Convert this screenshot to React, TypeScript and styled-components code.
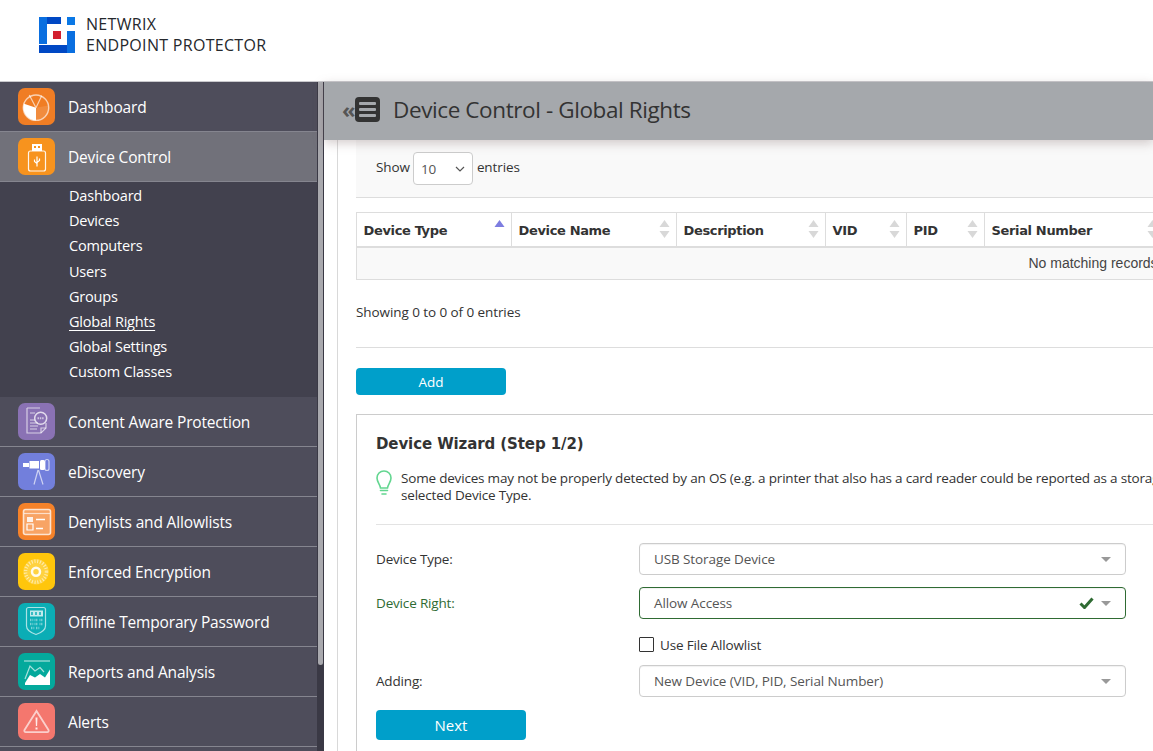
import React from 'react';
import styled, { createGlobalStyle } from 'styled-components';

const GlobalStyle = createGlobalStyle`
    html, body {
        margin: 0;
        height: 100%;
        overflow: hidden;
        background: #fff;
    }
    * {
        box-sizing: border-box;
    }
`;

const uiFont = `"Open Sans", "Noto Sans", "Liberation Sans", sans-serif`;

const Page = styled.div`
    width: 1153px;
    height: 751px;
    display: flex;
    flex-direction: column;
    overflow: hidden;
    font-family: ${uiFont};
    color: #333;
`;

const Header = styled.header`
    height: 82px;
    flex: none;
    display: flex;
    align-items: flex-start;
    gap: 11px;
    padding: 14px 0 0 39px;
    border-bottom: 1px solid #c9c9cd;
`;

const LogoMark = styled.svg`
    margin-top: 3px;
`;

const BrandText = styled.div`
    font-size: 16px;
    line-height: 21px;
    color: #25282d;
    letter-spacing: 0.3px;
    white-space: nowrap;
`;

const Body = styled.div`
    flex: 1;
    display: flex;
    min-height: 0;
`;

const Sidebar = styled.nav`
    width: 324px;
    flex: none;
    display: flex;
    background: #3a3945;
    overflow: hidden;
`;

const NavList = styled.div`
    width: 317px;
    flex: none;
    background: #4e4d5b;
`;

const Scrollbar = styled.div`
    width: 5px;
    height: 583px;
    margin-left: 1px;
    background: #a9a9ae;
    border-radius: 0 0 3px 3px;
`;

const NavRow = styled.div<{ $active?: boolean }>`
    height: 50px;
    display: flex;
    align-items: center;
    gap: 13px;
    padding-left: 18px;
    background: ${p => (p.$active ? '#71717a' : '#4e4d5b')};
    border-bottom: 1px solid #85858f;
    color: #fff;
    font-size: 15.5px;
    letter-spacing: -0.17px;
    white-space: nowrap;
`;

const NavIcon = styled.span<{ $bg: string }>`
    width: 37px;
    height: 37px;
    flex: none;
    display: block;
    border-radius: 7px;
    background: ${p => p.$bg};
    svg {
        display: block;
    }
`;

const SubMenu = styled.div`
    background: #42414e;
    padding: 1px 0 0 69px;
    height: 215px;
`;

const SubItem = styled.div<{ $current?: boolean }>`
    height: 25.2px;
    line-height: 25px;
    font-size: 14.5px;
    letter-spacing: -0.2px;
    color: #fff;
    text-decoration: ${p => (p.$current ? 'underline' : 'none')};
    text-underline-offset: 3px;
`;

const Main = styled.main`
    flex: 1;
    min-width: 0;
    display: flex;
    flex-direction: column;
`;

const TitleBar = styled.div`
    height: 58px;
    flex: none;
    display: flex;
    align-items: center;
    padding: 0 0 3px 18px;
    background: #a5a8ac;
    box-shadow: 0 3px 10px rgba(130, 105, 105, 0.35);
    position: relative;
    z-index: 1;
`;

const Collapse = styled.span`
    font-size: 22px;
    font-weight: 700;
    line-height: 22px;
    color: #555;
    width: 13px;
    margin-top: -2px;
`;

const Burger = styled.span`
    width: 25px;
    height: 25px;
    flex: none;
    display: flex;
    flex-direction: column;
    justify-content: center;
    gap: 3px;
    padding: 0 4px;
    background: #333;
    border-radius: 4px;
    i {
        display: block;
        height: 3px;
        background: #a5a8ac;
        border-radius: 1px;
    }
`;

const Title = styled.h1`
    margin: 0 0 0 13px;
    font-size: 22.5px;
    letter-spacing: -0.4px;
    font-weight: 400;
    color: #333;
    white-space: nowrap;
`;

const Content = styled.div`
    flex: 1;
    min-height: 0;
    margin-left: 13px;
    border-left: 1px solid #d9d9d9;
    padding-left: 18px;
    overflow: hidden;
`;

const LengthPanel = styled.div`
    width: 1000px;
    height: 58px;
    padding: 12px 0 0 20px;
    display: flex;
    align-items: flex-start;
    gap: 3px;
    background: #f9f9f9;
    border-bottom: 1px solid #ddd;
    font-size: 13.5px;
    letter-spacing: -0.1px;
    line-height: 30px;
`;

const LengthSelect = styled.div`
    width: 60px;
    height: 33px;
    display: flex;
    align-items: center;
    justify-content: space-between;
    padding: 0 7px;
    margin-right: 1px;
    background: #fff;
    border: 1px solid #ccc;
    border-radius: 4px;
    color: #555;
`;

const Table = styled.table`
    margin-top: 14px;
    width: 1512px;
    table-layout: fixed;
    border-collapse: collapse;
`;

const HeadCell = styled.th<{ $w: number }>`
    width: ${p => p.$w}px;
    height: 34px;
    padding: 2px 7px 0 6.5px;
    text-align: left;
    position: relative;
    border: 1px solid #ddd;
    border-bottom: 2px solid #ddd;
    font-family: "DejaVu Sans", sans-serif;
    font-size: 13px;
    font-weight: 700;
    letter-spacing: -0.35px;
    color: #333;
    white-space: nowrap;
`;

const SortIcon = styled.svg`
    position: absolute;
    right: 6px;
    top: 7px;
`;

const EmptyCell = styled.td`
    height: 33px;
    background: #f9f9f9;
    border: 1px solid #ddd;
    text-align: center;
    font-family: "Liberation Sans", sans-serif;
    font-size: 14px;
    color: #444;
`;

const Info = styled.div`
    margin-top: 23px;
    font-size: 13.5px;
    letter-spacing: -0.08px;
    line-height: 19px;
`;

const Divider = styled.hr`
    margin: 25px 0 20px;
    width: 1000px;
    height: 1px;
    border: 0;
    background: #ddd;
`;

const PrimaryButton = styled.button<{ $large?: boolean }>`
    display: block;
    width: 150px;
    height: ${p => (p.$large ? '30px' : '27px')};
    padding: 0;
    border: 0;
    border-radius: 4px;
    background: #009fca;
    color: #fff;
    font-family: ${uiFont};
    font-size: ${p => (p.$large ? '15px' : '13.5px')};
`;

const Wizard = styled.section`
    margin-top: 19px;
    width: 1000px;
    border: 1px solid #ccc;
    padding: 18px 19px 0;
    height: 400px;
`;

const WizardTitle = styled.h2`
    margin: 0;
    font-family: "DejaVu Sans", sans-serif;
    font-size: 15px;
    line-height: 22px;
    font-weight: 700;
    letter-spacing: -0.1px;
    color: #333;
`;

const Hint = styled.div`
    margin-top: 15px;
    padding-bottom: 20px;
    display: flex;
    gap: 9px;
    border-bottom: 1px solid #e3e3e3;
    font-size: 13.5px;
    letter-spacing: -0.19px;
    line-height: 17px;
    white-space: nowrap;
`;

const FormRow = styled.div<{ $top: number }>`
    margin-top: ${p => p.$top}px;
    display: flex;
    align-items: center;
    height: 32px;
`;

const FieldLabel = styled.label<{ $ok?: boolean }>`
    width: 263px;
    flex: none;
    font-size: 13.5px;
    letter-spacing: -0.17px;
    color: ${p => (p.$ok ? '#2f6b33' : '#333')};
`;

const SelectBox = styled.div<{ $ok?: boolean }>`
    width: 487px;
    height: 100%;
    display: flex;
    align-items: center;
    padding: 0 14px;
    background: #fff;
    border: 1px solid ${p => (p.$ok ? '#2f6b33' : '#ccc')};
    border-radius: 4px;
    font-size: 13.5px;
    letter-spacing: -0.1px;
    color: #555;
    box-shadow: inset 0 1px 1px rgba(0, 0, 0, 0.06);
    span {
        flex: 1;
    }
`;

const Caret = styled.i`
    width: 0;
    height: 0;
    border-left: 5px solid transparent;
    border-right: 5px solid transparent;
    border-top: 5px solid #999;
`;

const ValidMark = styled.svg`
    margin-right: 7px;
`;

const CheckRow = styled.label`
    margin: 17px 0 0 263px;
    height: 17px;
    display: flex;
    align-items: center;
    gap: 6px;
    font-size: 13.5px;
    letter-spacing: -0.17px;
`;

const CheckBox = styled.span`
    width: 15px;
    height: 15px;
    border: 1px solid #333;
    border-radius: 1px;
    background: #fff;
`;

const WizardActions = styled.div`
    margin-top: 13px;
`;

const BulbIcon = styled.svg`
    flex: none;
`;

const Logo = () => (
    <LogoMark width="36" height="36" viewBox="0 0 36 36">
        <path d="M0 0h8v27H0z" fill="#0a6fe0" />
        <path d="M8 0h14v7H8z" fill="#0048c4" />
        <path d="M28 0h8v8h-8z" fill="#0a78e6" />
        <path d="M0 28h28v8H0z" fill="#0048c4" />
        <path d="M28 14h8v22h-8z" fill="#0a6fe0" />
        <path d="M14 14h8v8h-8z" fill="#d3202f" />
    </LogoMark>
);

const stroke = { fill: 'none', stroke: '#fff', strokeWidth: 1.2 };
const pale = { fill: 'none', stroke: '#fff', strokeWidth: 1.2, opacity: 0.65 };

const icons: Record<string, React.ReactNode> = {
    pie: (
        <>
            <circle cx="18" cy="19.700" r="12.700" {...pale} strokeWidth={1.4} />
            <path d="M18 19.700L6 15.700A12.700 12.700 0 0 0 18 32.400z" fill="#fff" />
            <path d="M18 19.700L11.300 7M18 19.700L23.700 7.700" {...pale} />
            <path d="M18 19.700L30.500 17.500A12.700 12.700 0 0 1 18 32.400z" fill="#fff" opacity="0.12" />
        </>
    ),
    usb: (
        <>
            <path d="M14 6h10v7H14z" fill="#fff" />
            <path d="M16 8h2v2h-2zM20 8h2v2h-2z" fill="#f7931e" />
            <rect x="10.500" y="13" width="17" height="20" rx="2" {...stroke} opacity="0.9" />
            <path d="M19 18.500v10M16.500 21.500v2l2.500 2M21.500 20.500v2l-2.500 2" {...stroke} />
        </>
    ),
    paper: (
        <>
            <path d="M9 5h13M9 5v25h14l5-5v-5" {...pale} />
            <path d="M23 30v-5h5" {...pale} />
            <circle cx="22.700" cy="15.300" r="6" {...stroke} strokeWidth={1.5} opacity="0.75" />
            <path d="M19.500 15.300h6.500" stroke="#fff" strokeWidth="2" strokeDasharray="1.500 .8" opacity="0.6" />
            <path d="M12 10h5M12 17h5M12 20h8M12 23h8M12 26h7" stroke="#fff" strokeWidth="1.500" opacity="0.45" />
        </>
    ),
    scope: (
        <>
            <path d="M5 10h6v4H5zM11.500 8h9.500v7.500h-9.500z" fill="#fff" />
            <rect x="22" y="7" width="5" height="10" rx="1.500" fill="#fff" />
            <rect x="27" y="6.500" width="4" height="11" rx="2" {...pale} />
            <path d="M20 17l-4 14.500M20.500 17l4.500 14.500" {...pale} />
        </>
    ),
    list: (
        <>
            <rect x="5.500" y="6.500" width="27" height="25" rx="2" fill="#fff" fillOpacity="0.28" stroke="#fff" strokeOpacity="0.75" strokeWidth="1.600" />
            <path d="M6 10.500h26" {...pale} />
            <path d="M9 14h6v5H9z" fill="#fff" opacity="0.85" />
            <path d="M9 21h6v6H9z" fill="none" stroke="#fff" strokeWidth="1.200" />
            <path d="M18 16.500h9M18 25.500h7" stroke="#fff" strokeWidth="1.400" />
        </>
    ),
    lock: (
        <>
            <circle cx="18" cy="18.700" r="12.700" fill="#fff" opacity="0.22" />
            <circle cx="18" cy="18.700" r="10.500" fill="none" stroke="#fff" strokeWidth="3.500" strokeDasharray="1 1.800" opacity="0.6" />
            <circle cx="18" cy="18.700" r="4" fill="none" stroke="#fff" strokeWidth="2.500" opacity="0.9" />
        </>
    ),
    keypad: (
        <>
            <path d="M8.500 6.500a2 2 0 0 1 2-2h15a2 2 0 0 1 2 2V23c0 4-5 7-9.500 8.500C13.500 30 8.500 27 8.500 23z" {...pale} />
            <path d="M12 7.500h13v6H12z" fill="#fff" opacity="0.75" />
            <path d="M14 9v3M18 9v3M22 9v3" stroke="#0badb5" strokeWidth="1.500" />
            <path d="M12 17h3.500M16.500 17H20M21.500 17H25M12 21h3.500M16.500 21H20M21.500 21H25M13 25h3.500M18 25h3.500" stroke="#fff" strokeWidth="2.400" strokeDasharray="1 .6" opacity="0.45" />
        </>
    ),
    chart: (
        <>
            <path d="M6 8h26" {...pale} />
            <path d="M7 32v-2l5-8 5 2.500 5-3.500 5 3.500 5-8V32z" fill="#fff" />
            <path d="M7 26l5-13 5 5 5-3.500 4 4.500" {...pale} />
        </>
    ),
    alert: (
        <>
            <path d="M18.500 8L6.500 27a1.500 1.500 0 0 0 1.300 2.200h21.400a1.500 1.500 0 0 0 1.300-2.200z" {...pale} strokeWidth={1.800} />
            <path d="M17.500 14.500h2l-.4 8.500h-1.200zM17.500 24.500h2v2h-2z" fill="#fff" opacity="0.85" />
        </>
    ),
};

const navBefore = [
    { label: 'Dashboard', icon: 'pie', bg: '#f07d24' },
    { label: 'Device Control', icon: 'usb', bg: '#f7931e', active: true },
];

const navAfter = [
    { label: 'Content Aware Protection', icon: 'paper', bg: '#8a72b4' },
    { label: 'eDiscovery', icon: 'scope', bg: '#727fdc' },
    { label: 'Denylists and Allowlists', icon: 'list', bg: '#f5822a' },
    { label: 'Enforced Encryption', icon: 'lock', bg: '#ffc60b' },
    { label: 'Offline Temporary Password', icon: 'keypad', bg: '#0badb5' },
    { label: 'Reports and Analysis', icon: 'chart', bg: '#04a99c' },
    { label: 'Alerts', icon: 'alert', bg: '#f4776e' },
];

const subItems = ['Dashboard', 'Devices', 'Computers', 'Users', 'Groups', 'Global Rights', 'Global Settings', 'Custom Classes'];

const columns = [
    { label: 'Device Type', w: 155, sort: 'asc' },
    { label: 'Device Name', w: 165, sort: 'both' },
    { label: 'Description', w: 149, sort: 'both' },
    { label: 'VID', w: 81, sort: 'both' },
    { label: 'PID', w: 78, sort: 'both' },
    { label: 'Serial Number', w: 180, sort: 'both' },
    { label: '', w: 704, sort: 'none' },
];

const Sort = ({ mode }: { mode: string }) => (
    <SortIcon width="11" height="20" viewBox="0 0 11 20">
        <path d="M5.500 0L10.500 7H.5z" fill={mode === 'asc' ? '#7d7de0' : '#d8d8d8'} />
        {mode === 'both' && <path d="M5.500 18L10.500 11H.5z" fill="#d8d8d8" />}
    </SortIcon>
);

const NavEntry = ({ label, icon, bg, active }: { label: string; icon: string; bg: string; active?: boolean }) => (
    <NavRow $active={active}>
        <NavIcon $bg={bg}>
            <svg width="37" height="37" viewBox="0 0 37 37">
                {icons[icon]}
            </svg>
        </NavIcon>
        {label}
    </NavRow>
);

const Bulb = () => (
    <BulbIcon width="16" height="25" viewBox="0 0 16 25">
        <path
            d="M8 1C4 1 1 4 1 8c0 4 3 6 3.500 10h7C12 14 15 12 15 8c0-4-3-7-7-7zM4.500 20.500h7M6 24h4"
            fill="none"
            stroke="#63d690"
            strokeWidth="1.600"
            strokeLinecap="round"
        />
    </BulbIcon>
);

export default function App() {
    return (
        <Page>
            <GlobalStyle />
            <Header>
                <Logo />
                <BrandText>
                    NETWRIX
                    <br />
                    ENDPOINT PROTECTOR
                </BrandText>
            </Header>
            <Body>
                <Sidebar>
                    <NavList>
                        {navBefore.map(n => (
                            <NavEntry key={n.label} {...n} />
                        ))}
                        <SubMenu>
                            {subItems.map(s => (
                                <SubItem key={s} $current={s === 'Global Rights'}>
                                    {s}
                                </SubItem>
                            ))}
                        </SubMenu>
                        {navAfter.map(n => (
                            <NavEntry key={n.label} {...n} />
                        ))}
                    </NavList>
                    <Scrollbar />
                </Sidebar>
                <Main>
                    <TitleBar>
                        <Collapse>«</Collapse>
                        <Burger>
                            <i />
                            <i />
                            <i />
                        </Burger>
                        <Title>Device Control - Global Rights</Title>
                    </TitleBar>
                    <Content>
                        <LengthPanel>
                            Show
                            <LengthSelect>
                                10
                                <svg width="10" height="6" viewBox="0 0 10 6">
                                    <path d="M1 1l4 4 4-4" fill="none" stroke="#555" strokeWidth="1.200" />
                                </svg>
                            </LengthSelect>
                            entries
                        </LengthPanel>
                        <Table>
                            <thead>
                                <tr>
                                    {columns.map(c => (
                                        <HeadCell key={c.label} $w={c.w}>
                                            {c.label}
                                            {c.sort !== 'none' && <Sort mode={c.sort} />}
                                        </HeadCell>
                                    ))}
                                </tr>
                            </thead>
                            <tbody>
                                <tr>
                                    <EmptyCell colSpan={7}>No matching records found</EmptyCell>
                                </tr>
                            </tbody>
                        </Table>
                        <Info>Showing 0 to 0 of 0 entries</Info>
                        <Divider />
                        <PrimaryButton>Add</PrimaryButton>
                        <Wizard>
                            <WizardTitle>Device Wizard (Step 1/2)</WizardTitle>
                            <Hint>
                                <Bulb />
                                <div>
                                    Some devices may not be properly detected by an OS (e.g. a printer that also has a card reader could be reported as a storage device). Please verify the
                                    <br />
                                    selected Device Type.
                                </div>
                            </Hint>
                            <FormRow $top={18}>
                                <FieldLabel>Device Type:</FieldLabel>
                                <SelectBox>
                                    <span>USB Storage Device</span>
                                    <Caret />
                                </SelectBox>
                            </FormRow>
                            <FormRow $top={12}>
                                <FieldLabel $ok>Device Right:</FieldLabel>
                                <SelectBox $ok>
                                    <span>Allow Access</span>
                                    <ValidMark width="15" height="12" viewBox="0 0 15 12">
                                        <path d="M1.500 6.500l4 4L13.500 1.500" fill="none" stroke="#2f6b33" strokeWidth="3" />
                                    </ValidMark>
                                    <Caret />
                                </SelectBox>
                            </FormRow>
                            <CheckRow>
                                <CheckBox />
                                Use File Allowlist
                            </CheckRow>
                            <FormRow $top={12}>
                                <FieldLabel>Adding:</FieldLabel>
                                <SelectBox>
                                    <span>New Device (VID, PID, Serial Number)</span>
                                    <Caret />
                                </SelectBox>
                            </FormRow>
                            <WizardActions>
                                <PrimaryButton $large>Next</PrimaryButton>
                            </WizardActions>
                        </Wizard>
                    </Content>
                </Main>
            </Body>
        </Page>
    );
}
